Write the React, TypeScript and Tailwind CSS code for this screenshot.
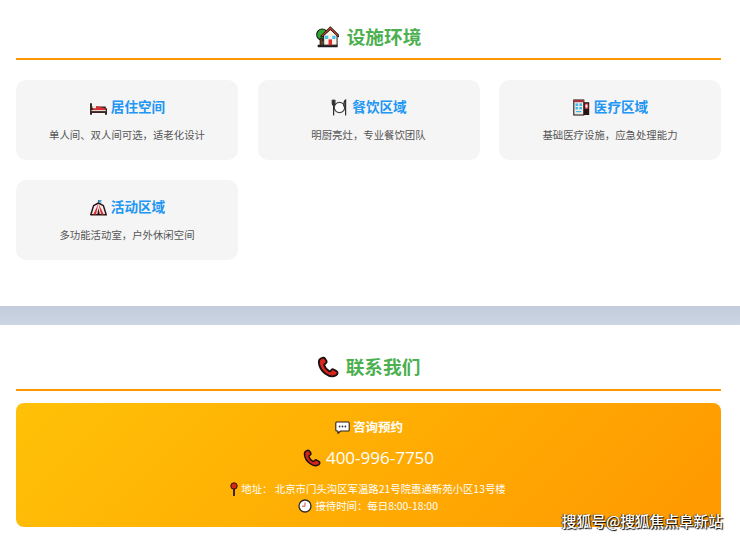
const House = () => (
  <svg width="23" height="23" viewBox="0 0 24 24" className="shrink-0">
    <circle cx="6.5" cy="10" r="5.8" fill="#2fa62f" stroke="#111" strokeWidth="1.1" />
    <rect x="4.2" y="14" width="2.4" height="7.5" fill="#6b3d1c" stroke="#111" strokeWidth=".7" />
    <rect x="1.8" y="20.6" width="20.8" height="2.6" rx=".6" fill="#1d1d1d" />
    <path d="M8 21V10.5L15 4.8 22 10.5V21Z" fill="#fbf2e6" stroke="#111" strokeWidth="1" />
    <path d="M5.9 11.8 15 3 23.4 11.4" fill="none" stroke="#111" strokeWidth="2.6" strokeLinecap="round" />
    <path d="M6.3 11.4 15 3.2 23 11" fill="none" stroke="#d9472b" strokeWidth="1.1" strokeLinecap="round" />
    <rect x="9.4" y="11.2" width="3.4" height="3.4" fill="#45c4f2" />
    <rect x="17" y="11.2" width="3.4" height="3.4" fill="#45c4f2" />
    <rect x="13.1" y="15" width="3.6" height="6" fill="#dc2e2e" />
  </svg>
);
const Bed = () => (
  <svg width="17" height="17" viewBox="0 0 17 17" className="shrink-0">
    <path d="M1 5v10M16 10V15" stroke="#221512" strokeWidth="1.8" strokeLinecap="round" />
    <path d="M1.5 7.5h14.3v6.5H1.5Z" fill="#3a2320" />
    <path d="M3.2 7.2h4.4l8 2.3v1.8H3.2Z" fill="#d92f35" />
    <path d="M2.4 6.6h3.6v2.6H2.4Z" fill="#f2e8de" />
    <path d="M1.5 11.6h14.3" stroke="#f4ece6" strokeWidth="1" />
  </svg>
);
const Plate = () => (
  <svg width="17" height="17" viewBox="0 0 17 17" className="shrink-0">
    <circle cx="8.5" cy="8.5" r="5.2" fill="#fff" stroke="#444" strokeWidth="1.2" />
    <path d="M2.6 1v4.5M1.3 1v3.6c0 1 .6 1.7 1.3 1.7s1.3-.7 1.3-1.7V1M2.6 6v10" fill="none" stroke="#2d2d2d" strokeWidth="1.2" strokeLinecap="round" />
    <path d="M14.6 16V1c-1.4.8-1.8 3-1.8 5.5 0 1.2.7 1.7 1.8 1.7" fill="#777" stroke="#2d2d2d" strokeWidth="1.2" strokeLinecap="round" />
  </svg>
);
const Hospital = () => (
  <svg width="17" height="17" viewBox="0 0 17 17" className="shrink-0">
    <rect x=".8" y="1" width="10" height="15" fill="#f1ebe8" stroke="#2a1a1a" strokeWidth="1.1" />
    <rect x=".8" y="1" width="10" height="2.2" fill="#a8303a" />
    <rect x="2.5" y="4.4" width="2.6" height="2.6" fill="#3fb8ea" />
    <rect x="6.4" y="4.4" width="2.6" height="2.6" fill="#3fb8ea" />
    <rect x="2.5" y="8" width="2.6" height="2.4" fill="#3fb8ea" />
    <rect x="6.4" y="8" width="2.6" height="2.4" fill="#3fb8ea" />
    <rect x="3" y="12" width="5.2" height="1.2" fill="#3fb8ea" />
    <rect x="10.8" y="3.2" width="5.4" height="12.8" fill="#231715" />
    <rect x="11.8" y="4.6" width="3.4" height="5.2" fill="#e4505a" />
    <path d="M13.5 5.6v3M12.2 7.1h2.6" stroke="#fff" strokeWidth=".9" />
  </svg>
);
const Tent = () => (
  <svg width="17" height="17" viewBox="0 0 17 17" className="shrink-0">
    <path d="M8.5 4 13.4 6.6l2.8 9.2H.8L3.6 6.6Z" fill="#f7eeee" stroke="#2a1414" strokeWidth="1.5" strokeLinejoin="round" />
    <path d="M8.5 4.5 6 15.6H3.2ZM8.5 4.5 11 15.6h2.8Z" fill="#dd2f37" />
    <path d="M7.2 15.6 8.5 9l1.3 6.6Z" fill="#231313" />
    <path d="M8.5 4.5V1" stroke="#222" strokeWidth=".9" />
    <path d="M8.5 1h3.4L11 2.4l.9 1H8.5Z" fill="#46a6d8" />
  </svg>
);
const Phone = ({ size }: { size: number }) => (
  <svg width={size} height={size} viewBox="0 0 24 24" className="shrink-0">
    <path
      d="M5 2.2c-2 .8-3.2 2.6-3 5 .4 4.6 3.2 9 6.8 11.8 3 2.3 6.6 3.6 9.6 3 2-.4 3.6-1.6 4-3.2.2-.9-.1-1.6-.9-2.1l-3.2-2c-.9-.6-1.8-.5-2.5.3l-1.3 1.4c-.4.4-.8.4-1.3.1-2.2-1.3-4.5-4-5.3-6.3-.2-.5-.1-.9.4-1.2l1.4-1c.9-.6 1.1-1.4.8-2.4L8.8 3C8.3 1.8 6.5 1.5 5 2.2Z"
      fill="#d5261e"
      stroke="#1d0f0f"
      strokeWidth="2"
      strokeLinejoin="round"
    />
  </svg>
);
const Speech = () => (
  <svg width="15" height="15" viewBox="0 0 15 15" className="shrink-0">
    <path d="M1.8 2h11.4a1 1 0 0 1 1 1v7a1 1 0 0 1-1 1H5.6L3 13.4V11H1.8a1 1 0 0 1-1-1V3a1 1 0 0 1 1-1Z" fill="#fff" stroke="#2b2320" strokeWidth="1.1" strokeLinejoin="round" />
    <circle cx="4.6" cy="6.5" r=".9" fill="#333" />
    <circle cx="7.5" cy="6.5" r=".9" fill="#333" />
    <circle cx="10.4" cy="6.5" r=".9" fill="#333" />
  </svg>
);
const Pin = () => (
  <svg width="12" height="14" viewBox="0 0 12 14" className="shrink-0">
    <path d="M6 6.5V13.4" stroke="#332b22" strokeWidth="2" strokeLinecap="round" />
    <circle cx="6" cy="4" r="3.2" fill="#d5261e" stroke="#2a1212" strokeWidth="1" />
  </svg>
);
const Clock = () => (
  <svg width="14" height="14" viewBox="0 0 14 14" className="shrink-0">
    <circle cx="7" cy="7" r="6" fill="#fff" stroke="#2b2b2b" strokeWidth="1.3" />
    <path d="M7 3.4V7.2H3.9" fill="none" stroke="#d5464a" strokeWidth="1" />
  </svg>
);

const cards = [
  { icon: <Bed />, title: "居住空间", desc: "单人间、双人间可选，适老化设计" },
  { icon: <Plate />, title: "餐饮区域", desc: "明厨亮灶，专业餐饮团队" },
  { icon: <Hospital />, title: "医疗区域", desc: "基础医疗设施，应急处理能力" },
  { icon: <Tent />, title: "活动区域", desc: "多功能活动室，户外休闲空间" },
];

export default function App() {
  return (
    <div className="relative h-[539px] w-[740px] overflow-hidden bg-white font-['Noto_Sans_CJK_SC','Noto_Sans',sans-serif]">
      <section className="pl-4 pr-[19px] pt-[20px] pb-[46px]">
        <h2 className="box-content flex h-[38px] items-start justify-center gap-[8px] border-b-2 border-[#ff9800] text-[18.7px] font-bold leading-[32px] text-[#4caf50]">
          <span className="mt-[5px]"><House /></span>
          <span>设施环境</span>
        </h2>
        <div className="mt-[20px] grid grid-cols-3 gap-x-[19.5px] gap-y-5">
          {cards.map((c) => (
            <div key={c.title} className="flex h-[80px] flex-col items-center rounded-[10px] bg-[#f5f5f5] pt-[14px] pl-[1px]">
              <h3 className="flex h-[26px] items-center gap-[4px] text-[13.6px] font-bold text-[#2196f3]">
                {c.icon}
                <span className="-mt-[2px]">{c.title}</span>
              </h3>
              <p className="mt-[6px] -ml-[1px] text-[10.4px] leading-[18px] text-[#555]">{c.desc}</p>
            </div>
          ))}
        </div>
      </section>

      <div className="h-[19px] bg-gradient-to-b from-[#c3ccdb] to-[#ccd5e2]" />

      <section className="pl-4 pr-[19px] pt-[25px]">
        <h2 className="box-content flex h-[39px] items-start justify-center gap-[7px] border-b-2 border-[#ff9800] text-[18.7px] font-bold leading-[32px] text-[#4caf50]">
          <span className="mt-[6px]"><Phone size={22} /></span>
          <span>联系我们</span>
        </h2>
        <div className="mt-[12px] flex h-[124px] flex-col items-center rounded-[8px] bg-linear-135 from-[#ffc107] to-[#ff9800] pt-[14px] text-white">
          <div className="flex h-[20px] items-center gap-[3px] pl-[1px] text-[12.5px] font-bold">
            <Speech />
            <span>咨询预约</span>
          </div>
          <div className="mt-[9px] flex h-[24px] items-center gap-[5px] text-[17px]">
            <Phone size={18} />
            <span className="font-['Open_Sans',sans-serif]">400-996-7750</span>
          </div>
          <div className="mt-[11px] flex h-[16px] items-center gap-[1px] pr-[3px] text-[10.4px]">
            <Pin />
            <span>地址： 北京市门头沟区军温路21号院惠通新苑小区13号楼</span>
          </div>
          <div className="mt-[1px] flex h-[16px] items-center gap-[1px] pr-[1px] text-[10.4px]">
            <Clock />
            <span>&nbsp;接待时间：每日8:00-18:00</span>
          </div>
        </div>
      </section>

      <div className="absolute right-[17px] top-[511px] text-[14.7px] font-medium leading-[20px] text-white [text-shadow:1px_1px_1px_#000,-1px_0_1px_#333]">
        搜狐号@搜狐焦点阜新站
      </div>
    </div>
  );
}
